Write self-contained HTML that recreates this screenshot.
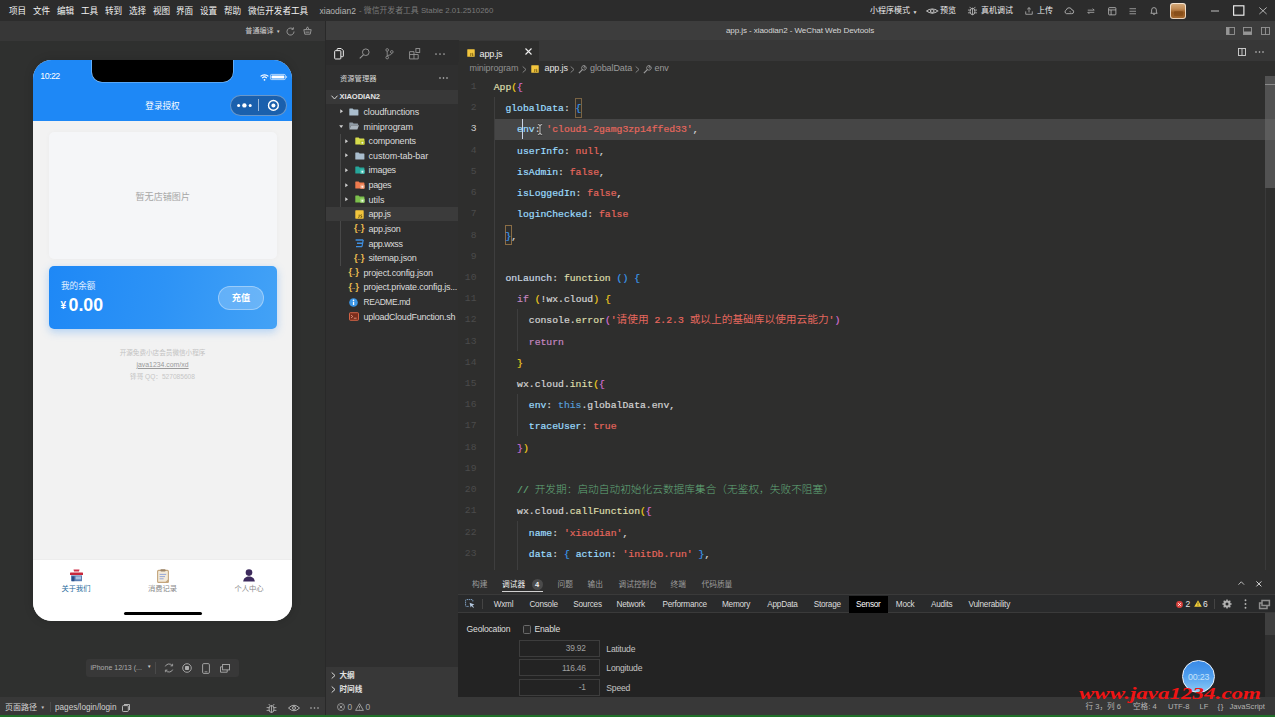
<!DOCTYPE html>
<html lang="zh-CN">
<head>
<meta charset="utf-8">
<title>app.js - xiaodian2 - WeChat Web Devtools</title>
<style>
*{box-sizing:border-box;margin:0;padding:0}
html,body{width:1275px;height:717px;overflow:hidden;background:#292929}
body{position:relative;font-family:"Liberation Sans","Noto Sans CJK SC",sans-serif;font-size:9px;color:#e8e8e8;-webkit-font-smoothing:antialiased}
.abs{position:absolute}
.t{position:absolute;white-space:nowrap;line-height:1}
svg{position:absolute;overflow:visible}
/* ---------- title bar ---------- */
#titlebar{left:0;top:0;width:1275px;height:20.6px;background:#2c2c2c}
#titlebar .m{font-size:8.6px;color:#f2f2f2;top:7px}
#titlebar .r{font-size:8px;color:#ececec;top:7.3px}
#row2l{left:0;top:20.6px;width:324.5px;height:20.4px;background:#373737}
#row2r{left:325.5px;top:20.6px;width:949.5px;height:19.8px;background:#3d3d3d}
/* ---------- simulator ---------- */
#sim{left:0;top:41px;width:324.5px;height:656px;background:#2f302f}
#simbar{left:0;top:697px;width:324.5px;height:18px;background:#383838}
#green{left:0;top:714.5px;width:1275px;height:2.5px;background:#1f6f28}
/* ---------- vs code ---------- */
.ptab{font-size:7.7px;top:10px}
.dt{font-size:8.2px;top:29.7px;letter-spacing:-0.22px}
.inp{left:61.2px;width:81px;height:17px;border:1px solid #3d3d3d;background:#232323}
.iv{left:61.2px;width:66.5px;text-align:right;font-size:8.4px;color:#a0a0a0;letter-spacing:-0.2px}
.il{left:148.3px;font-size:8.6px;color:#c4c4c4;letter-spacing:-0.2px}
.st{font-size:7.6px;color:#b4b4b4;top:6.2px}
.bc{font-size:9px;top:2.3px;letter-spacing:-0.1px}
.ln{left:0;width:18.5px;text-align:right;font-family:"Liberation Mono","DejaVu Sans Mono",monospace;font-size:9.7px}
.cl{-webkit-text-stroke:0.2px;left:35.7px;font-family:"Liberation Mono","DejaVu Sans Mono","Noto Sans CJK SC",monospace;font-size:9.75px;white-space:pre;color:#d4d4d4;line-height:13px}
.cj{font-family:"Noto Sans CJK SC",sans-serif;font-size:10.7px;line-height:0;-webkit-text-stroke:0;font-weight:300}
.tr{font-size:9px;color:#dcdcdc;letter-spacing:0px;margin-top:0.9px}
#actbg{left:325.5px;top:40.4px;width:133.5px;height:24.2px;background:#2c2c2c}
#actbar{left:327px;top:41px;width:131px;height:24px}
#sidebg{left:325.5px;top:64.6px;width:133.5px;height:632.4px;background:#2f2f2f}
#side{left:327px;top:65px;width:131px;height:632px}
#edtbg{left:459px;top:40.4px;width:816px;height:21px;background:#373737}
#edtabs{left:457.6px;top:41px;width:817px;height:20.5px}
#editor{left:458px;top:62px;width:817px;height:509px;background:#2e2e2d}
#panel{left:458px;top:571px;width:817px;height:126px;background:#2e2e2e}
#statbg{left:325.5px;top:697px;width:949.5px;height:18px;background:#383838}
#edbg{left:459px;top:61.4px;width:816px;height:2px;background:#2e2e2d}
#status{left:327px;top:697px;width:948px;height:17px}
</style>
</head>
<body>
<div id="titlebar" class="abs">
<span class="t m" style="left:9px">项目</span>
<span class="t m" style="left:33px">文件</span>
<span class="t m" style="left:57px">编辑</span>
<span class="t m" style="left:81px">工具</span>
<span class="t m" style="left:105px">转到</span>
<span class="t m" style="left:129px">选择</span>
<span class="t m" style="left:153px">视图</span>
<span class="t m" style="left:176px">界面</span>
<span class="t m" style="left:200px">设置</span>
<span class="t m" style="left:224px">帮助</span>
<span class="t m" style="left:248px">微信开发者工具</span>
<span class="t" style="left:319.5px;top:7px;font-size:8.5px;color:#b4b4b4">xiaodian2</span>
<span class="t" style="left:359px;top:7.3px;font-size:7.85px;color:#7a7a7a">- 微信开发者工具 Stable 2.01.2510260</span>
<span class="t r" style="left:870px">小程序模式</span>
<span class="t" style="left:912.5px;top:9.5px;font-size:5px;color:#ddd">▼</span>
<svg style="left:925.5px;top:7px" width="12.5" height="8" viewBox="0 0 11 9" preserveAspectRatio="none"><path d="M0.5 4.5 Q5.5 -0.5 10.5 4.5 Q5.5 9.5 0.5 4.5Z" fill="none" stroke="#cfcfcf" stroke-width="0.9"/><circle cx="5.5" cy="4.5" r="1.6" fill="none" stroke="#cfcfcf" stroke-width="0.9"/></svg>
<span class="t r" style="left:940px">预览</span>
<svg style="left:966.5px;top:5.5px" width="11" height="10" viewBox="0 0 12 11"><ellipse cx="6" cy="6" rx="2.6" ry="3.6" fill="none" stroke="#cfcfcf" stroke-width="0.9"/><path d="M6 2.4V9.6M4 2.5 3 1M8 2.5 9 1M3.4 4.5H1M3.4 7.5H1M8.6 4.5H11M8.6 7.5H11" stroke="#cfcfcf" stroke-width="0.8" fill="none"/></svg>
<span class="t r" style="left:981px">真机调试</span>
<svg style="left:1024.5px;top:6.5px" width="8" height="8" viewBox="0 0 11 11"><path d="M1 6V10H10V6M5.5 7.5V1M3 3.2 5.5 0.8 8 3.2" fill="none" stroke="#cfcfcf" stroke-width="0.9"/></svg>
<span class="t r" style="left:1037px">上传</span>
<svg style="left:1064px;top:7px" width="10" height="7.5" viewBox="0 0 12 9"><path d="M3 8H9.2A2.3 2.3 0 0 0 9.4 3.4 3.4 3.4 0 0 0 2.8 3.6 2.3 2.3 0 0 0 3 8Z" fill="none" stroke="#cfcfcf" stroke-width="0.9"/><path d="M7 5l1 1.5" stroke="#cfcfcf" stroke-width="0.8"/></svg>
<svg style="left:1086.5px;top:7.5px" width="8" height="6.5" viewBox="0 0 11 9"><path d="M1 3H10L7.8 0.8M10 6H1L3.2 8.2" fill="none" stroke="#cfcfcf" stroke-width="0.9"/></svg>
<svg style="left:1107.5px;top:6.5px" width="8.5" height="8.5" viewBox="0 0 11 11"><rect x="0.8" y="0.8" width="9.4" height="9.4" rx="1" fill="none" stroke="#cfcfcf" stroke-width="0.9"/><path d="M0.8 3.8H10.2M4 3.8V10.2" stroke="#cfcfcf" stroke-width="0.9"/></svg>
<svg style="left:1129px;top:7.5px" width="7.5" height="6.5" viewBox="0 0 10 9"><path d="M0.5 1H9.5M0.5 4.5H9.5M0.5 8H9.5" stroke="#cfcfcf" stroke-width="0.9"/></svg>
<svg style="left:1150px;top:6px" width="8" height="9.5" viewBox="0 0 10 12"><path d="M1 9.2H9L8 7.6V5A3 3 0 0 0 2 5V7.6Z" fill="none" stroke="#cfcfcf" stroke-width="0.9"/><path d="M4 10.6H6" stroke="#cfcfcf" stroke-width="0.9"/></svg>
<div class="abs" style="left:1169.8px;top:2.6px;width:16.4px;height:16.4px;border-radius:3px;background:linear-gradient(180deg,#f4e4d2 0%,#e8cfb6 100%)"></div>
<div class="abs" style="left:1171px;top:4.2px;width:14px;height:13.6px;border-radius:2px;background:linear-gradient(180deg,#d4a878 0%,#c08a54 35%,#96581f 62%,#a4682e 100%)"></div>
<div class="abs" style="left:1173.5px;top:11px;width:9.5px;height:4.5px;border-radius:1px;background:#7c4514;opacity:.55"></div>
<svg style="left:1210.5px;top:10px" width="8" height="2" viewBox="0 0 12 2" preserveAspectRatio="none"><path d="M0 1H12" stroke="#e0e0e0" stroke-width="1"/></svg>
<svg style="left:1233px;top:5px" width="11.5" height="11" viewBox="0 0 13 12"><rect x="0.7" y="0.7" width="11.6" height="10.6" fill="none" stroke="#f0f0f0" stroke-width="1.3"/></svg>
<svg style="left:1258.5px;top:7px" width="8" height="7.5" viewBox="0 0 11 10"><path d="M0.5 0.5 10.5 9.5M10.5 0.5 0.5 9.5" stroke="#e0e0e0" stroke-width="1"/></svg>
</div>
<div id="row2l" class="abs">
<span class="t" style="left:245.3px;top:7.2px;font-size:7.1px;color:#d0d0d0">普通编译</span>
<span class="t" style="left:276px;top:9px;font-size:4.5px;color:#ccc">▼</span>
<svg style="left:286px;top:6px" width="9" height="9" viewBox="0 0 11 11"><path d="M8.6 2.6A4.3 4.3 0 1 0 9.8 5.5" fill="none" stroke="#b4b4b4" stroke-width="0.9"/><path d="M6.6 2.8H9V0.4" fill="none" stroke="#b4b4b4" stroke-width="0.9"/></svg>
<svg style="left:302.5px;top:5.5px" width="9" height="9" viewBox="0 0 11 11"><path d="M1 4.5H10L8.8 10H2.2ZM3.5 4.5 5.5 1 7.5 4.5M3 7.5H8" fill="none" stroke="#b4b4b4" stroke-width="0.9"/></svg>
</div>
<div id="row2r" class="abs">
<span class="t" style="left:0;width:949px;text-align:center;top:6.8px;font-size:8.1px;letter-spacing:-0.1px;color:#d6d6d6">app.js - xiaodian2 - WeChat Web Devtools</span>
<svg style="left:900px;top:6px" width="9" height="8" viewBox="0 0 9 8"><rect x="0.5" y="0.5" width="8" height="7" fill="none" stroke="#969696" stroke-width="0.9"/><rect x="0.5" y="0.5" width="3" height="7" fill="#969696"/></svg>
<svg style="left:917px;top:6px" width="9" height="8" viewBox="0 0 9 8"><rect x="0.5" y="0.5" width="8" height="7" fill="none" stroke="#969696" stroke-width="0.9"/><rect x="0.5" y="4.5" width="8" height="3" fill="#969696"/></svg>
<svg style="left:935px;top:6px" width="9" height="8" viewBox="0 0 9 8"><rect x="0.5" y="0.5" width="8" height="7" fill="none" stroke="#969696" stroke-width="0.9"/><path d="M4.5 0.5V7.5" stroke="#969696" stroke-width="0.9"/></svg>
</div>
<div id="sim" class="abs">
<div id="phone" class="abs" style="left:33px;top:19px;width:259px;height:561px;border-radius:18.5px;background:#f2f2f2;overflow:hidden;box-shadow:0 0 8px 1px rgba(0,0,0,.13)">
 <div class="abs" style="left:0;top:0;width:259px;height:61px;background:#1e88f6"></div>
 <div class="abs" style="left:59.2px;top:-12px;width:140.5px;height:33.5px;border-radius:10px;background:#000;box-shadow:0 0 0 0.6px rgba(190,225,255,.7)"></div>
 <span class="t" style="left:7.3px;top:12.2px;font-size:8.8px;color:#fff;letter-spacing:-0.55px">10:22</span>
 <svg style="left:227px;top:13.5px" width="9" height="7" viewBox="0 0 9 7"><path d="M0.6 2.4A5.6 5.6 0 0 1 8.4 2.4" fill="none" stroke="#fff" stroke-width="1.2"/><path d="M2.2 4.1A3.3 3.3 0 0 1 6.8 4.1" fill="none" stroke="#fff" stroke-width="1.2"/><circle cx="4.5" cy="5.8" r="0.9" fill="#fff"/></svg>
 <svg style="left:237px;top:14px" width="18" height="6" viewBox="0 0 18 6"><rect x="0.4" y="0.4" width="15" height="5.2" rx="1.2" fill="none" stroke="#fff" stroke-width="0.8" opacity=".8"/><rect x="1.5" y="1.4" width="12.8" height="3.2" rx="0.5" fill="#fff"/><path d="M16.2 2V4L17.3 3Z" fill="#fff"/></svg>
 <span class="t" style="left:0;width:259px;text-align:center;top:42.3px;font-size:8.6px;color:#fff">登录授权</span>
 <div class="abs" style="left:197px;top:34.5px;width:57px;height:21px;border-radius:11px;background:#1a60ad;border:0.7px solid rgba(255,255,255,.35)"></div>
 <svg style="left:203px;top:42px" width="17" height="7" viewBox="0 0 17 7"><circle cx="2.6" cy="3.4" r="1.5" fill="#fff"/><circle cx="8.4" cy="3.4" r="2.2" fill="#fff"/><circle cx="14.2" cy="3.4" r="1.5" fill="#fff"/></svg>
 <div class="abs" style="left:225px;top:39px;width:1px;height:12px;background:rgba(255,255,255,.55)"></div>
 <svg style="left:234px;top:39px" width="13" height="13" viewBox="0 0 13 13"><circle cx="6.4" cy="6.4" r="4.9" fill="none" stroke="#fff" stroke-width="1.4"/><circle cx="6.4" cy="6.4" r="2" fill="#fff"/></svg>

 <div class="abs" style="left:16px;top:72px;width:227.5px;height:127px;border-radius:5px;background:#f5f6f8;box-shadow:0 0 5px rgba(0,0,0,.03)"></div>
 <span class="t" style="left:16px;width:227.5px;text-align:center;top:132.5px;font-size:9.1px;color:#a6a6a6">暂无店铺图片</span>

 <div class="abs" style="left:16px;top:206px;width:227.5px;height:63px;border-radius:5px;background:linear-gradient(100deg,#1e88f6 0%,#2d93f6 50%,#43a2f6 100%);box-shadow:0 3px 9px rgba(60,150,245,.35)"></div>
 <span class="t" style="left:28px;top:221.5px;font-size:8.6px;color:#e4f0fe">我的余额</span>
 <span class="t" style="left:27.5px;top:241px;font-size:10px;color:#fff;font-weight:bold">¥</span>
 <span class="t" style="left:35.5px;top:236.5px;font-size:17.8px;color:#fff;font-weight:bold">0.00</span>
 <div class="abs" style="left:185px;top:226px;width:46px;height:23.5px;border-radius:12px;background:rgba(255,255,255,.22);border:0.7px solid rgba(255,255,255,.35)"></div>
 <span class="t" style="left:185px;width:46px;text-align:center;top:233.5px;font-size:9.2px;color:#fff;font-weight:bold">充值</span>

 <span class="t" style="left:0;width:259px;text-align:center;top:289.5px;font-size:6.6px;color:#c2c2c2">开源免费小店会员微信小程序</span>
 <span class="t" style="left:0;width:259px;text-align:center;top:301.5px;font-size:6.9px;color:#9a9a9a;text-decoration:underline">java1234.com/xd</span>
 <span class="t" style="left:0;width:259px;text-align:center;top:313.5px;font-size:6.6px;color:#c6c6c6">锋哥 QQ：527085608</span>

 <div class="abs" style="left:0;top:500px;width:259px;height:61px;background:#fff;box-shadow:0 -0.5px 0 rgba(0,0,0,.04)"></div>
 <!-- tab icons -->
 <svg style="left:37px;top:509px" width="13" height="13" viewBox="0 0 13 13"><path d="M3.5 0.6H9.5L9 2.4H4Z" fill="#d0334a"/><rect x="0" y="3.6" width="13" height="2.3" rx="0.5" fill="#c8283c"/><rect x="1" y="6.4" width="11" height="5.8" fill="#5a7fb4"/><rect x="2" y="7.4" width="2.4" height="4.8" fill="#2b4f86"/><rect x="5.6" y="7.4" width="5.4" height="3" fill="#a9c0e2"/></svg>
 <span class="t" style="left:0;width:86px;text-align:center;top:525px;font-size:7.3px;color:#276a9c">关于我们</span>
 <svg style="left:123.5px;top:508.5px" width="12" height="14" viewBox="0 0 12 14"><rect x="0.6" y="1.4" width="10.8" height="12" rx="1" fill="#f3ead9" stroke="#c4a57c" stroke-width="1.1"/><rect x="3.4" y="0.2" width="5.2" height="2.4" rx="0.8" fill="#9b8468"/><path d="M2.6 5.4H9.2M2.6 7.6H8M2.6 9.8H6.6" stroke="#8a9fd6" stroke-width="0.9"/><path d="M8 13.4 11.4 10V13.4Z" fill="#c4a57c"/></svg>
 <span class="t" style="left:86px;width:87px;text-align:center;top:525px;font-size:7.3px;color:#8a8a8a">消费记录</span>
 <svg style="left:210px;top:509px" width="12" height="13" viewBox="0 0 12 13"><circle cx="6" cy="3.6" r="3.3" fill="#3c2a5c"/><path d="M0.2 12.6C0.6 9 3 7.6 6 7.6S11.4 9 11.8 12.6Z" fill="#3c2a5c"/></svg>
 <span class="t" style="left:173px;width:86px;text-align:center;top:525px;font-size:7.3px;color:#8a8a8a">个人中心</span>
 <div class="abs" style="left:91px;top:551.5px;width:78px;height:3.6px;border-radius:2px;background:#000"></div>
</div>

<div class="abs" style="left:86px;top:618px;width:153px;height:18px;border-radius:3px;background:#383838"></div>
<span class="t" style="left:90.5px;top:623px;font-size:7px;color:#adadad">iPhone 12/13 (...</span>
<span class="t" style="left:147px;top:624px;font-size:4.5px;color:#ccc">▼</span>
<div class="abs" style="left:155px;top:621px;width:1px;height:12px;background:#4a4a4a"></div>
<svg style="left:163.5px;top:622px" width="10" height="10" viewBox="0 0 10 10"><path d="M1.3 3.4A4 4 0 0 1 8.2 2.6M8.7 6.6A4 4 0 0 1 1.8 7.4" fill="none" stroke="#adadad" stroke-width="0.9"/><path d="M8.6 0.8V2.9H6.5M1.4 9.2V7.1H3.5" fill="none" stroke="#adadad" stroke-width="0.8"/></svg>
<svg style="left:182px;top:622px" width="10" height="10" viewBox="0 0 10 10"><circle cx="5" cy="5" r="4.3" fill="none" stroke="#adadad" stroke-width="0.9"/><rect x="3" y="3" width="4" height="4" rx="0.8" fill="#adadad"/></svg>
<svg style="left:202px;top:621.5px" width="8" height="11" viewBox="0 0 8 11"><rect x="0.6" y="0.6" width="6.8" height="9.8" rx="1.2" fill="none" stroke="#adadad" stroke-width="0.9"/><path d="M2.6 8.8H5.4" stroke="#adadad" stroke-width="0.8"/></svg>
<svg style="left:219.5px;top:622.5px" width="10" height="9" viewBox="0 0 10 9"><rect x="2.6" y="0.5" width="6.9" height="5.4" fill="none" stroke="#adadad" stroke-width="0.9"/><path d="M2.6 2.8H0.5V8.2H7.2V5.9" fill="none" stroke="#adadad" stroke-width="0.9"/></svg>
</div>
<div id="simbar" class="abs">
<span class="t" style="left:5px;top:6.5px;font-size:8px;color:#d4d4d4">页面路径</span>
<span class="t" style="left:40.5px;top:9px;font-size:4.5px;color:#c8c8c8">▼</span>
<div class="abs" style="left:50px;top:5px;width:1px;height:10px;background:#4c4c4c"></div>
<span class="t" style="left:55px;top:6.5px;font-size:8.2px;color:#cfcfcf">pages/login/login</span>
<svg style="left:122px;top:6.5px" width="8" height="8" viewBox="0 0 8 8"><rect x="0.5" y="1.6" width="5.8" height="5.9" rx="0.8" fill="none" stroke="#c4c4c4" stroke-width="0.9"/><path d="M2 0.5H7.5V6" fill="none" stroke="#c4c4c4" stroke-width="0.9"/></svg>
<svg style="left:265.5px;top:5.5px" width="11" height="11" viewBox="0 0 11 11"><ellipse cx="5.5" cy="6" rx="2.5" ry="3.5" fill="none" stroke="#bdbdbd" stroke-width="0.9"/><path d="M5.5 2.5V9.5M3.8 2.6 2.8 1M7.2 2.6 8.2 1M3 4.6H0.6M3 7.4H0.6M8 4.6H10.4M8 7.4H10.4" stroke="#bdbdbd" stroke-width="0.8" fill="none"/></svg>
<svg style="left:288px;top:7px" width="12" height="8" viewBox="0 0 12 8"><path d="M0.5 4Q6 -1.5 11.5 4Q6 9.5 0.5 4Z" fill="none" stroke="#bdbdbd" stroke-width="0.9"/><circle cx="6" cy="4" r="1.5" fill="none" stroke="#bdbdbd" stroke-width="0.9"/></svg>
<svg style="left:310px;top:10px" width="9" height="2" viewBox="0 0 9 2"><circle cx="1" cy="1" r="0.8" fill="#bdbdbd"/><circle cx="4.5" cy="1" r="0.8" fill="#bdbdbd"/><circle cx="8" cy="1" r="0.8" fill="#bdbdbd"/></svg>
</div>
<div id="actbg" class="abs"></div>
<div id="sidebg" class="abs"></div>
<div id="actbar" class="abs">
<svg style="left:6.5px;top:7px" width="10" height="11.5" viewBox="0 0 11 13"><path d="M3.4 2.6V1.4Q3.4 0.6 4.2 0.6H8L10.4 3V9Q10.4 9.8 9.6 9.8H8" fill="none" stroke="#f4f4f4" stroke-width="1.1"/><rect x="0.6" y="3" width="7" height="9.4" rx="0.9" fill="none" stroke="#f4f4f4" stroke-width="1.1"/></svg>
<svg style="left:31.5px;top:7px" width="11" height="11" viewBox="0 0 12 12"><circle cx="7.4" cy="4.6" r="3.6" fill="none" stroke="#9a9a9a" stroke-width="1"/><path d="M4.8 7.4 0.8 11.4" stroke="#9a9a9a" stroke-width="1.1"/></svg>
<svg style="left:57.5px;top:7px" width="9" height="11.5" viewBox="0 0 10 13"><circle cx="2.4" cy="2.2" r="1.5" fill="none" stroke="#9a9a9a" stroke-width="0.9"/><circle cx="2.4" cy="10.8" r="1.5" fill="none" stroke="#9a9a9a" stroke-width="0.9"/><circle cx="7.6" cy="4.4" r="1.5" fill="none" stroke="#9a9a9a" stroke-width="0.9"/><path d="M2.4 3.7V9.3M7.6 5.9Q7.6 8 2.6 8.6" fill="none" stroke="#9a9a9a" stroke-width="0.9"/></svg>
<svg style="left:82px;top:7px" width="11.5" height="11.5" viewBox="0 0 12 12"><path d="M0.6 3.8H5.2V11.4H0.6ZM5.2 6.8H9.6V11.4H5.2M0.6 6.8H5.2" fill="none" stroke="#9a9a9a" stroke-width="0.9"/><rect x="7.2" y="0.6" width="4" height="4" fill="none" stroke="#9a9a9a" stroke-width="0.9"/></svg>
<svg style="left:108px;top:11.5px" width="10" height="2" viewBox="0 0 10 2"><circle cx="1" cy="1" r="0.85" fill="#a8a8a8"/><circle cx="5" cy="1" r="0.85" fill="#a8a8a8"/><circle cx="9" cy="1" r="0.85" fill="#a8a8a8"/></svg>
</div>
<div id="side" class="abs">
<span class="t" style="left:13px;top:9.8px;font-size:7.3px;color:#d8d8d8">资源管理器</span>
<svg style="left:112px;top:12.3px" width="9" height="2" viewBox="0 0 9 2"><circle cx="1" cy="1" r="0.8" fill="#d0d0d0"/><circle cx="4.5" cy="1" r="0.8" fill="#d0d0d0"/><circle cx="8" cy="1" r="0.8" fill="#d0d0d0"/></svg>
<div class="abs" style="left:-1.5px;top:25px;width:133.5px;height:13.5px;background:#383838"></div>
<svg style="left:4px;top:29.5px" width="7" height="5" viewBox="0 0 7 5"><path d="M0.5 0.7 3.5 4 6.5 0.7" fill="none" stroke="#d8d8d8" stroke-width="1"/></svg>
<span class="t" style="left:12.5px;top:28px;font-size:7.6px;color:#e2e2e2;font-weight:bold;letter-spacing:-0.1px">XIAODIAN2</span>
<div class="abs" style="left:12.5px;top:69px;width:1px;height:132px;background:#484848"></div>
<svg style="left:12.5px;top:44.4px" width="3.2" height="4.4" viewBox="0 0 4 5"><path d="M0.3 0V5L3.8 2.5Z" fill="#cfcfcf"/></svg>
<svg style="left:22px;top:42.7px" width="10" height="8" viewBox="0 0 10 8"><path d="M0.3 7V0.9Q0.3 0.4 0.8 0.4H3.6L4.6 1.5H8.8Q9.4 1.5 9.4 2.1V7Q9.4 7.5 8.8 7.5H0.9Q0.3 7.5 0.3 7Z" fill="#a9bdcd"/></svg>
<span class="t tr" style="left:36.5px;top:42.1px;letter-spacing:-0.14px">cloudfunctions</span>
<svg style="left:12.0px;top:59.5px" width="4.4" height="3.2" viewBox="0 0 5 4"><path d="M0 0.3H5L2.5 3.8Z" fill="#cfcfcf"/></svg>
<svg style="left:22px;top:57.3px" width="10" height="8" viewBox="0 0 10 8"><path d="M0.3 7.5V0.9Q0.3 0.4 0.8 0.4H3.6L4.6 1.5H8.6Q9.1 1.5 9.1 2V3H2.2Z" fill="#8e9aa3"/><path d="M0.4 7.6 2.2 3.2H10L8.4 7.6Z" fill="#aab5bd"/></svg>
<span class="t tr" style="left:36.5px;top:56.7px;letter-spacing:-0.05px">miniprogram</span>
<svg style="left:17.600000000000023px;top:73.6px" width="3.2" height="4.4" viewBox="0 0 4 5"><path d="M0.3 0V5L3.8 2.5Z" fill="#cfcfcf"/></svg>
<svg style="left:27.5px;top:71.9px" width="10" height="8" viewBox="0 0 10 8"><path d="M0.3 7V0.9Q0.3 0.4 0.8 0.4H3.6L4.6 1.5H8.8Q9.4 1.5 9.4 2.1V7Q9.4 7.5 8.8 7.5H0.9Q0.3 7.5 0.3 7Z" fill="#d6dc4c"/><rect x="5.2" y="3.6" width="4.4" height="4.2" rx="0.8" fill="#b8c22c"/><circle cx="7.4" cy="5.7" r="1" fill="#fff" opacity=".85"/></svg>
<span class="t tr" style="left:41.6px;top:71.3px;letter-spacing:-0.17px">components</span>
<svg style="left:17.600000000000023px;top:88.3px" width="3.2" height="4.4" viewBox="0 0 4 5"><path d="M0.3 0V5L3.8 2.5Z" fill="#cfcfcf"/></svg>
<svg style="left:27.5px;top:86.6px" width="10" height="8" viewBox="0 0 10 8"><path d="M0.3 7V0.9Q0.3 0.4 0.8 0.4H3.6L4.6 1.5H8.8Q9.4 1.5 9.4 2.1V7Q9.4 7.5 8.8 7.5H0.9Q0.3 7.5 0.3 7Z" fill="#a9bdcd"/></svg>
<span class="t tr" style="left:41.6px;top:86.0px;letter-spacing:-0.07px">custom-tab-bar</span>
<svg style="left:17.600000000000023px;top:102.9px" width="3.2" height="4.4" viewBox="0 0 4 5"><path d="M0.3 0V5L3.8 2.5Z" fill="#cfcfcf"/></svg>
<svg style="left:27.5px;top:101.2px" width="10" height="8" viewBox="0 0 10 8"><path d="M0.3 7V0.9Q0.3 0.4 0.8 0.4H3.6L4.6 1.5H8.8Q9.4 1.5 9.4 2.1V7Q9.4 7.5 8.8 7.5H0.9Q0.3 7.5 0.3 7Z" fill="#26a69a"/><rect x="5.2" y="3.6" width="4.4" height="4.2" rx="0.8" fill="#4dc4b8"/><circle cx="7.4" cy="5.7" r="1" fill="#fff" opacity=".85"/></svg>
<span class="t tr" style="left:41.6px;top:100.6px;letter-spacing:-0.30px">images</span>
<svg style="left:17.600000000000023px;top:117.5px" width="3.2" height="4.4" viewBox="0 0 4 5"><path d="M0.3 0V5L3.8 2.5Z" fill="#cfcfcf"/></svg>
<svg style="left:27.5px;top:115.8px" width="10" height="8" viewBox="0 0 10 8"><path d="M0.3 7V0.9Q0.3 0.4 0.8 0.4H3.6L4.6 1.5H8.8Q9.4 1.5 9.4 2.1V7Q9.4 7.5 8.8 7.5H0.9Q0.3 7.5 0.3 7Z" fill="#ee7b4e"/><rect x="5.2" y="3.6" width="4.4" height="4.2" rx="0.8" fill="#f4a07c"/><circle cx="7.4" cy="5.7" r="1" fill="#fff" opacity=".85"/></svg>
<span class="t tr" style="left:41.6px;top:115.2px;letter-spacing:-0.38px">pages</span>
<svg style="left:17.600000000000023px;top:132.1px" width="3.2" height="4.4" viewBox="0 0 4 5"><path d="M0.3 0V5L3.8 2.5Z" fill="#cfcfcf"/></svg>
<svg style="left:27.5px;top:130.4px" width="10" height="8" viewBox="0 0 10 8"><path d="M0.3 7V0.9Q0.3 0.4 0.8 0.4H3.6L4.6 1.5H8.8Q9.4 1.5 9.4 2.1V7Q9.4 7.5 8.8 7.5H0.9Q0.3 7.5 0.3 7Z" fill="#7cc04c"/><rect x="5.2" y="3.6" width="4.4" height="4.2" rx="0.8" fill="#a0d878"/><circle cx="7.4" cy="5.7" r="1" fill="#fff" opacity=".85"/></svg>
<span class="t tr" style="left:41.6px;top:129.8px;letter-spacing:-0.04px">utils</span>
<div class="abs" style="left:0;top:141.9px;width:133.5px;margin-left:-1.5px;height:14.6px;background:#3b3b3b"></div>
<svg style="left:27.5px;top:144.7px" width="9" height="9" viewBox="0 0 9 9"><rect x="0.3" y="0.3" width="8.4" height="8.4" rx="0.6" fill="#f2c53d"/><path d="M4.2 4.6V7Q4.2 7.8 3.3 7.6M6.9 5Q5.6 4.4 5.6 5.4T6.9 6.6 5.5 7.5" fill="none" stroke="#5a4708" stroke-width="0.75"/></svg>
<span class="t tr" style="left:41.6px;top:144.4px;letter-spacing:-0.32px">app.js</span>
<span class="t" style="left:27.0px;top:158.4px;font-size:9.5px;color:#e7b94f;font-weight:bold;letter-spacing:-0.3px;font-family:'Liberation Sans',sans-serif">{<span style="font-size:6px;letter-spacing:0;position:relative;top:-0.5px">..</span>}</span>
<span class="t tr" style="left:41.6px;top:159.1px;letter-spacing:-0.27px">app.json</span>
<svg style="left:27.5px;top:174.0px" width="9" height="9" viewBox="0 0 9 9"><path d="M0.6 1H8.2M2 4.2H7.6M1 7.6H7" stroke="#3f8fe0" stroke-width="1.4" fill="none"/><path d="M8.2 1 7 7.6" stroke="#3f8fe0" stroke-width="1.2"/></svg>
<span class="t tr" style="left:41.6px;top:173.7px;letter-spacing:-0.46px">app.wxss</span>
<span class="t" style="left:27.0px;top:187.6px;font-size:9.5px;color:#e7b94f;font-weight:bold;letter-spacing:-0.3px;font-family:'Liberation Sans',sans-serif">{<span style="font-size:6px;letter-spacing:0;position:relative;top:-0.5px">..</span>}</span>
<span class="t tr" style="left:41.6px;top:188.3px;letter-spacing:-0.22px">sitemap.json</span>
<span class="t" style="left:21.5px;top:202.2px;font-size:9.5px;color:#e7b94f;font-weight:bold;letter-spacing:-0.3px;font-family:'Liberation Sans',sans-serif">{<span style="font-size:6px;letter-spacing:0;position:relative;top:-0.5px">..</span>}</span>
<span class="t tr" style="left:36.5px;top:202.9px;letter-spacing:-0.17px">project.config.json</span>
<span class="t" style="left:21.5px;top:216.8px;font-size:9.5px;color:#e7b94f;font-weight:bold;letter-spacing:-0.3px;font-family:'Liberation Sans',sans-serif">{<span style="font-size:6px;letter-spacing:0;position:relative;top:-0.5px">..</span>}</span>
<span class="t tr" style="left:36.5px;top:217.5px;letter-spacing:-0.21px">project.private.config.js...</span>
<svg style="left:22px;top:232.5px" width="9" height="9" viewBox="0 0 9 9"><circle cx="4.5" cy="4.5" r="4.3" fill="#3b96e6"/><rect x="3.9" y="3.8" width="1.3" height="3.2" fill="#fff"/><circle cx="4.5" cy="2.4" r="0.8" fill="#fff"/></svg>
<span class="t tr" style="left:36.5px;top:232.2px;letter-spacing:-0.35px;font-size:8.4px">README.md</span>
<svg style="left:21.5px;top:247.1px" width="10" height="9" viewBox="0 0 10 9"><rect x="0.5" y="0.7" width="9" height="7.6" rx="0.8" fill="#7a2e1c" stroke="#e2694a" stroke-width="0.9"/><path d="M2 3 3.8 4.5 2 6M4.8 6.2H7.6" fill="none" stroke="#f0a58e" stroke-width="0.8"/></svg>
<span class="t tr" style="left:36.5px;top:246.8px;letter-spacing:-0.24px">uploadCloudFunction.sh</span>
<div class="abs" style="left:-1.5px;top:602px;width:133.5px;height:30px;background:#383838"></div>
<svg style="left:4px;top:607px" width="5" height="7" viewBox="0 0 5 7"><path d="M0.7 0.5 4 3.5 0.7 6.5" fill="none" stroke="#d8d8d8" stroke-width="1"/></svg>
<span class="t" style="left:12.5px;top:606.5px;font-size:7.6px;color:#e2e2e2;font-weight:bold">大纲</span>
<svg style="left:4px;top:621px" width="5" height="7" viewBox="0 0 5 7"><path d="M0.7 0.5 4 3.5 0.7 6.5" fill="none" stroke="#d8d8d8" stroke-width="1"/></svg>
<span class="t" style="left:12.5px;top:620.5px;font-size:7.6px;color:#e2e2e2;font-weight:bold">时间线</span>
</div>
<div id="edtbg" class="abs"></div>
<div id="edbg" class="abs"></div>
<div id="statbg" class="abs"></div>
<div id="edtabs" class="abs">
<div class="abs" style="left:1.2px;top:-0.2px;width:80px;height:21px;background:#2e2e2d"></div>
<svg style="left:9px;top:8px" width="8" height="8" viewBox="0 0 9 9"><rect x="0.3" y="0.3" width="8.4" height="8.4" rx="0.6" fill="#f2c53d"/><path d="M4.2 4.6V7Q4.2 7.8 3.3 7.6M6.9 5Q5.6 4.4 5.6 5.4T6.9 6.6 5.5 7.5" fill="none" stroke="#5a4708" stroke-width="0.75"/></svg>
<span class="t" style="left:22px;top:8.5px;font-size:9px;color:#f0f0f0;letter-spacing:-0.2px">app.js</span>
<svg style="left:67px;top:7px" width="7" height="7" viewBox="0 0 7 7"><path d="M0.5 0.5 6.5 6.5M6.5 0.5 0.5 6.5" stroke="#f0f0f0" stroke-width="1.1"/></svg>
<svg style="left:780px;top:6.5px" width="8" height="8" viewBox="0 0 8 8"><rect x="0.5" y="0.5" width="7" height="7" fill="none" stroke="#d4d4d4" stroke-width="0.9"/><path d="M4 0.5V7.5" stroke="#d4d4d4" stroke-width="0.9"/></svg>
<svg style="left:797px;top:9.5px" width="9" height="2" viewBox="0 0 9 2"><circle cx="1" cy="1" r="0.8" fill="#d0d0d0"/><circle cx="4.5" cy="1" r="0.8" fill="#d0d0d0"/><circle cx="8" cy="1" r="0.8" fill="#d0d0d0"/></svg>
</div>
<div id="editor" class="abs">
<span class="t bc" style="left:11.5px;color:#909090">miniprogram</span>
<svg style="left:64px;top:4px" width="5" height="7" viewBox="0 0 5 7"><path d="M0.7 0.5 4 3.5 0.7 6.5" fill="none" stroke="#8c8c8c" stroke-width="0.9"/></svg>
<svg style="left:73px;top:2.8px" width="8" height="8" viewBox="0 0 9 9"><rect x="0.3" y="0.3" width="8.4" height="8.4" rx="0.6" fill="#f2c53d"/><path d="M4.2 4.6V7Q4.2 7.8 3.3 7.6M6.9 5Q5.6 4.4 5.6 5.4T6.9 6.6 5.5 7.5" fill="none" stroke="#5a4708" stroke-width="0.75"/></svg>
<span class="t bc" style="left:86.5px;color:#e4e4e4">app.js</span>
<svg style="left:111.5px;top:4px" width="5" height="7" viewBox="0 0 5 7"><path d="M0.7 0.5 4 3.5 0.7 6.5" fill="none" stroke="#8c8c8c" stroke-width="0.9"/></svg>
<svg style="left:120px;top:2.5px" width="9" height="9" viewBox="0 0 9 9"><path d="M0.9 8.1 4.6 4.4" stroke="#9a9a9a" stroke-width="1.3" fill="none"/><path d="M7.9 1.6 6.4 3 5.7 2.4 7.2 0.9A2.3 2.3 0 1 0 7.9 1.6Z" fill="none" stroke="#9a9a9a" stroke-width="0.9"/></svg>
<span class="t bc" style="left:132px;color:#9a9a9a">globalData</span>
<svg style="left:177px;top:4px" width="5" height="7" viewBox="0 0 5 7"><path d="M0.7 0.5 4 3.5 0.7 6.5" fill="none" stroke="#8c8c8c" stroke-width="0.9"/></svg>
<svg style="left:184.5px;top:2.5px" width="9" height="9" viewBox="0 0 9 9"><path d="M0.9 8.1 4.6 4.4" stroke="#9a9a9a" stroke-width="1.3" fill="none"/><path d="M7.9 1.6 6.4 3 5.7 2.4 7.2 0.9A2.3 2.3 0 1 0 7.9 1.6Z" fill="none" stroke="#9a9a9a" stroke-width="0.9"/></svg>
<span class="t bc" style="left:196.5px;color:#9a9a9a">env</span>
<div class="abs" style="left:35.5px;top:56.5px;width:771.5px;height:21px;background:#464646"></div>
<div class="abs" style="left:36px;top:35px;width:1px;height:473px;background:#3e3e3e"></div>
<div class="abs" style="left:59px;top:247px;width:1px;height:42px;background:#3e3e3e"></div>
<div class="abs" style="left:59px;top:332px;width:1px;height:42px;background:#3e3e3e"></div>
<div class="abs" style="left:59px;top:459px;width:1px;height:49px;background:#3e3e3e"></div>
<div class="abs" style="left:117px;top:35.5px;width:6.5px;height:20.5px;border:0.8px solid #7a6444"></div>
<div class="abs" style="left:47px;top:162.5px;width:6.5px;height:20.5px;border:0.8px solid #8a6d45"></div>
<!--CODE-->
<span class="t ln" style="top:20.0px;color:#4b4b4b">1</span>
<span class="t cl" style="top:19.0px"><span style="color:#dcdcaa">App</span><span style="color:#f2cf1d">(</span><span style="color:#d670d6">{</span></span>
<span class="t ln" style="top:41.2px;color:#4b4b4b">2</span>
<span class="t cl" style="top:40.2px">  <span style="color:#9cdcfe">globalData</span><span style="color:#d4d4d4">: </span><span style="color:#3b9bf0">{</span></span>
<span class="t ln" style="top:62.4px;color:#d0d0d0">3</span>
<span class="t cl" style="top:61.4px">    <span style="color:#9cdcfe">env</span><span style="color:#d4d4d4">: </span><span style="color:#e5675d">'cloud1-2gamg3zp14ffed33'</span><span style="color:#d4d4d4">,</span></span>
<span class="t ln" style="top:83.6px;color:#4b4b4b">4</span>
<span class="t cl" style="top:82.6px">    <span style="color:#9cdcfe">userInfo</span><span style="color:#d4d4d4">: </span><span style="color:#e5675d">null</span><span style="color:#d4d4d4">,</span></span>
<span class="t ln" style="top:104.8px;color:#4b4b4b">5</span>
<span class="t cl" style="top:103.8px">    <span style="color:#9cdcfe">isAdmin</span><span style="color:#d4d4d4">: </span><span style="color:#e5675d">false</span><span style="color:#d4d4d4">,</span></span>
<span class="t ln" style="top:126.0px;color:#4b4b4b">6</span>
<span class="t cl" style="top:125.0px">    <span style="color:#9cdcfe">isLoggedIn</span><span style="color:#d4d4d4">: </span><span style="color:#e5675d">false</span><span style="color:#d4d4d4">,</span></span>
<span class="t ln" style="top:147.2px;color:#4b4b4b">7</span>
<span class="t cl" style="top:146.2px">    <span style="color:#9cdcfe">loginChecked</span><span style="color:#d4d4d4">: </span><span style="color:#e5675d">false</span></span>
<span class="t ln" style="top:168.5px;color:#4b4b4b">8</span>
<span class="t cl" style="top:167.5px">  <span style="color:#3b9bf0">}</span><span style="color:#d4d4d4">,</span></span>
<span class="t ln" style="top:189.7px;color:#4b4b4b">9</span>
<span class="t ln" style="top:210.9px;color:#4b4b4b">10</span>
<span class="t cl" style="top:209.9px">  <span style="color:#c9d7e2">onLaunch</span><span style="color:#d4d4d4">: </span><span style="color:#dcdcaa">function</span> <span style="color:#3b9bf0">()</span> <span style="color:#3b9bf0">{</span></span>
<span class="t ln" style="top:232.1px;color:#4b4b4b">11</span>
<span class="t cl" style="top:231.1px">    <span style="color:#c586c0">if</span> <span style="color:#f2cf1d">(</span><span style="color:#d4d4d4">!</span><span style="color:#d4d4d4">wx.cloud</span><span style="color:#f2cf1d">)</span> <span style="color:#f2cf1d">{</span></span>
<span class="t ln" style="top:253.3px;color:#4b4b4b">12</span>
<span class="t cl" style="top:252.3px">      <span style="color:#d4d4d4">console.</span><span style="color:#dcdcaa">error</span><span style="color:#d670d6">(</span><span style="color:#e5675d">'<span class="cj" style="font-weight:400">请使用</span> 2.2.3 <span class="cj" style="font-weight:400">或以上的基础库以使用云能力</span>'</span><span style="color:#d670d6">)</span></span>
<span class="t ln" style="top:274.5px;color:#4b4b4b">13</span>
<span class="t cl" style="top:273.5px">      <span style="color:#c586c0">return</span></span>
<span class="t ln" style="top:295.7px;color:#4b4b4b">14</span>
<span class="t cl" style="top:294.7px">    <span style="color:#f2cf1d">}</span></span>
<span class="t ln" style="top:317.0px;color:#4b4b4b">15</span>
<span class="t cl" style="top:316.0px">    <span style="color:#d4d4d4">wx.cloud.</span><span style="color:#dcdcaa">init</span><span style="color:#f2cf1d">(</span><span style="color:#d670d6">{</span></span>
<span class="t ln" style="top:338.2px;color:#4b4b4b">16</span>
<span class="t cl" style="top:337.2px">      <span style="color:#9cdcfe">env</span><span style="color:#d4d4d4">: </span><span style="color:#569cd6">this</span><span style="color:#d4d4d4">.globalData.env,</span></span>
<span class="t ln" style="top:359.4px;color:#4b4b4b">17</span>
<span class="t cl" style="top:358.4px">      <span style="color:#9cdcfe">traceUser</span><span style="color:#d4d4d4">: </span><span style="color:#e5675d">true</span></span>
<span class="t ln" style="top:380.6px;color:#4b4b4b">18</span>
<span class="t cl" style="top:379.6px">    <span style="color:#d670d6">}</span><span style="color:#f2cf1d">)</span></span>
<span class="t ln" style="top:401.8px;color:#4b4b4b">19</span>
<span class="t ln" style="top:423.0px;color:#4b4b4b">20</span>
<span class="t cl" style="top:422.0px">    <span style="color:#62a97a">// <span class="cj">开发期：启动自动初始化云数据库集合（无鉴权，失败不阻塞）</span></span></span>
<span class="t ln" style="top:444.2px;color:#4b4b4b">21</span>
<span class="t cl" style="top:443.2px">    <span style="color:#d4d4d4">wx.cloud.</span><span style="color:#dcdcaa">callFunction</span><span style="color:#f2cf1d">(</span><span style="color:#d670d6">{</span></span>
<span class="t ln" style="top:465.5px;color:#4b4b4b">22</span>
<span class="t cl" style="top:464.5px">      <span style="color:#9cdcfe">name</span><span style="color:#d4d4d4">: </span><span style="color:#e5675d">'xiaodian'</span><span style="color:#d4d4d4">,</span></span>
<span class="t ln" style="top:486.7px;color:#4b4b4b">23</span>
<span class="t cl" style="top:485.7px">      <span style="color:#9cdcfe">data</span><span style="color:#d4d4d4">: </span><span style="color:#3b9bf0">{</span> <span style="color:#9cdcfe">action</span><span style="color:#d4d4d4">: </span><span style="color:#e5675d">'initDb.run'</span> <span style="color:#3b9bf0">}</span><span style="color:#d4d4d4">,</span></span>
<!--/CODE-->
<div class="abs" style="left:64px;top:57px;width:1px;height:20px;background:#c9d4e6"></div>
<svg style="left:78.5px;top:62px" width="6" height="11" viewBox="0 0 6 11"><path d="M0.8 0.8H2.2Q3 0.8 3 1.6V9.4Q3 10.2 2.2 10.2H0.8M5.2 0.8H3.8Q3 0.8 3 1.6M3 9.4Q3 10.2 3.8 10.2H5.2" fill="none" stroke="#111" stroke-width="2.2"/><path d="M0.8 0.8H2.2Q3 0.8 3 1.6V9.4Q3 10.2 2.2 10.2H0.8M5.2 0.8H3.8Q3 0.8 3 1.6M3 9.4Q3 10.2 3.8 10.2H5.2" fill="none" stroke="#fff" stroke-width="0.9"/></svg>
<div class="abs" style="left:807px;top:14px;width:1px;height:494px;background:#3a3a3a"></div>
<div class="abs" style="left:807px;top:14px;width:10px;height:112px;background:#525252"></div>
<div class="abs" style="left:807px;top:56.5px;width:10px;height:21px;background:#5c5c5c"></div>
<div class="abs" style="left:807px;top:22.2px;width:10px;height:1.2px;background:#8a8a8a"></div>
</div>
<div id="panel" class="abs">
<span class="t ptab" style="left:14.0px;color:#9d9d9d">构建</span>
<span class="t ptab" style="left:44.0px;color:#f0f0f0">调试器</span>
<div class="abs" style="left:43.5px;top:19.7px;width:41.5px;height:1px;background:#d0d0d0"></div>
<div class="abs" style="left:73.5px;top:8px;width:11px;height:11px;border-radius:6px;background:#4b4b4b"></div>
<span class="t" style="left:73.5px;width:11px;text-align:center;top:9.8px;font-size:7.5px;color:#f0f0f0;font-weight:bold">4</span>
<span class="t ptab" style="left:99.5px;color:#9d9d9d">问题</span>
<span class="t ptab" style="left:129.5px;color:#9d9d9d">输出</span>
<span class="t ptab" style="left:160.5px;color:#9d9d9d">调试控制台</span>
<span class="t ptab" style="left:212.5px;color:#9d9d9d">终端</span>
<span class="t ptab" style="left:243.5px;color:#9d9d9d">代码质量</span>
<svg style="left:780.3px;top:10px" width="6.6" height="4.2" viewBox="0 0 8 5"><path d="M0.6 4.4 4 0.9 7.4 4.4" fill="none" stroke="#d8d8d8" stroke-width="1"/></svg>
<svg style="left:798.2px;top:9.7px" width="5.8" height="5.8" viewBox="0 0 7 7"><path d="M0.5 0.5 6.5 6.5M6.5 0.5 0.5 6.5" stroke="#d8d8d8" stroke-width="1.2"/></svg>

<div id="dtbar" class="abs" style="left:0;top:23px;width:817px;height:19px;background:#292a2b;border-top:1px solid #3a3a3a;border-bottom:1px solid #3a3a3a"></div>
<svg style="left:7px;top:28px" width="10" height="9" viewBox="0 0 10 9"><path d="M3.6 7.4H1.4Q0.6 7.4 0.6 6.6V1.4Q0.6 0.6 1.4 0.6H7Q7.8 0.6 7.8 1.4V3" fill="none" stroke="#8ab0d8" stroke-width="0.9" stroke-dasharray="1.4 0.6"/><path d="M4.6 3.8 9.4 5.6 7.4 6.4 9 8.2 8.2 8.8 6.6 7 5.6 8.6Z" fill="#b4c8e0"/></svg>
<div class="abs" style="left:23.5px;top:28px;width:1px;height:10px;background:#444"></div>
<span class="t dt" style="left:35.7px;color:#dcdcdc">Wxml</span>
<span class="t dt" style="left:71.4px;color:#dcdcdc">Console</span>
<span class="t dt" style="left:115.3px;color:#dcdcdc">Sources</span>
<span class="t dt" style="left:158.5px;color:#dcdcdc">Network</span>
<span class="t dt" style="left:204.4px;color:#dcdcdc">Performance</span>
<span class="t dt" style="left:264.0px;color:#dcdcdc">Memory</span>
<span class="t dt" style="left:309.3px;color:#dcdcdc">AppData</span>
<span class="t dt" style="left:355.7px;color:#dcdcdc">Storage</span>
<div class="abs" style="left:391px;top:24.5px;width:39px;height:17px;background:#000"></div>
<span class="t dt" style="left:398.0px;color:#fff">Sensor</span>
<span class="t dt" style="left:437.8px;color:#dcdcdc">Mock</span>
<span class="t dt" style="left:473.0px;color:#dcdcdc">Audits</span>
<span class="t dt" style="left:510.6px;color:#dcdcdc">Vulnerability</span>
<svg style="left:717.5px;top:29.5px" width="7" height="7" viewBox="0 0 7 7"><circle cx="3.5" cy="3.5" r="3.4" fill="#d9423e"/><path d="M2.2 2.2 4.8 4.8M4.8 2.2 2.2 4.8" stroke="#fff" stroke-width="0.9"/></svg>
<span class="t" style="left:727.5px;top:29px;font-size:8.5px;color:#e6e6e6">2</span>
<svg style="left:735.5px;top:29px" width="8" height="7" viewBox="0 0 8 7"><path d="M4 0.2 7.8 6.8H0.2Z" fill="#f0cd3a"/><path d="M4 2.4V4.6M4 5.3V6" stroke="#5a4a10" stroke-width="0.8"/></svg>
<span class="t" style="left:745px;top:29px;font-size:8.5px;color:#e6e6e6">6</span>
<div class="abs" style="left:755.5px;top:28px;width:1px;height:10px;background:#444"></div>
<svg style="left:763.5px;top:28px" width="10" height="10" viewBox="0 0 10 10"><circle cx="5" cy="5" r="2.6" fill="none" stroke="#b0b0b0" stroke-width="2"/><path d="M5 0.4V9.6M0.4 5H9.6M1.7 1.7 8.3 8.3M8.3 1.7 1.7 8.3" stroke="#b0b0b0" stroke-width="1.5"/><circle cx="5" cy="5" r="1.5" fill="#292a2b"/></svg>
<svg style="left:786px;top:28px" width="3" height="10" viewBox="0 0 3 10"><circle cx="1.5" cy="1.3" r="0.95" fill="#b4b4b4"/><circle cx="1.5" cy="5" r="0.95" fill="#b4b4b4"/><circle cx="1.5" cy="8.7" r="0.95" fill="#b4b4b4"/></svg>
<svg style="left:801px;top:28.5px" width="11" height="9" viewBox="0 0 11 9"><path d="M3 0.6H10.4V5.6H3Z" fill="none" stroke="#8e8e8e" stroke-width="1.5"/><path d="M3 3H0.6V8.4H8V5.6" fill="none" stroke="#8e8e8e" stroke-width="1.5"/></svg>

<div id="sensor" class="abs" style="left:0;top:42px;width:817px;height:84px;background:#232323"></div>
<span class="t" style="left:8.6px;top:54px;font-size:8.6px;color:#dedede;letter-spacing:-0.2px">Geolocation</span>
<div class="abs" style="left:64.5px;top:54px;width:8.5px;height:8.5px;border:1px solid #6a6a6a;border-radius:1.5px;background:#2a2a2a"></div>
<span class="t" style="left:76.5px;top:54px;font-size:8.6px;color:#dedede;letter-spacing:-0.2px">Enable</span>
<div class="abs inp" style="top:68.5px"></div><span class="t iv" style="top:73px">39.92</span><span class="t il" style="top:74px">Latitude</span>
<div class="abs inp" style="top:88px"></div><span class="t iv" style="top:92.5px">116.46</span><span class="t il" style="top:93px">Longitude</span>
<div class="abs inp" style="top:107.7px"></div><span class="t iv" style="top:112px">-1</span><span class="t il" style="top:112.5px">Speed</span>
<div class="abs" style="left:807px;top:42px;width:10px;height:84px;background:#2f2f2f"></div>
<div class="abs" style="left:807px;top:42px;width:10px;height:22px;background:#3f3f3f"></div>
</div>
<div id="status" class="abs">
<svg style="left:10px;top:5.5px" width="8" height="8" viewBox="0 0 8 8"><circle cx="4" cy="4" r="3.5" fill="none" stroke="#a4a4a4" stroke-width="0.8"/><path d="M2.6 2.6 5.4 5.4M5.4 2.6 2.6 5.4" stroke="#b4b4b4" stroke-width="0.8"/></svg>
<span class="t st" style="left:20.5px;font-size:8.4px;top:5.8px;color:#a8a8a8">0</span>
<svg style="left:27.5px;top:5.5px" width="9" height="8" viewBox="0 0 9 8"><path d="M4.5 0.7 8.4 7.4H0.6Z" fill="none" stroke="#b4b4b4" stroke-width="0.8"/><path d="M4.5 3V5.2M4.5 5.9V6.5" stroke="#b4b4b4" stroke-width="0.7"/></svg>
<span class="t st" style="left:38.5px;font-size:8.4px;top:5.8px;color:#a8a8a8">0</span>
<span class="t st" style="left:758.5px">行 3，列 6</span>
<span class="t st" style="left:806px">空格: 4</span>
<span class="t st" style="left:841px">UTF-8</span>
<span class="t st" style="left:872.5px">LF</span>
<span class="t st" style="left:890.5px;font-size:8px;letter-spacing:0.6px;top:5.6px">{}</span>
<span class="t st" style="left:902.5px">JavaScript</span>
</div>
<div class="abs" style="left:1181.7px;top:659.7px;width:33.8px;height:33.8px;border-radius:17px;background:linear-gradient(180deg,#3a8ae6 0%,#4c9cee 45%,#8ccbf5 100%);border:1.5px solid #eef6ff"></div>
<span class="t" style="left:1181.7px;width:33.8px;text-align:center;top:672.5px;font-size:8.8px;color:#c4e2fa;letter-spacing:-0.2px">00:23</span>
<span class="t" id="wm" style="left:1078.5px;top:685.5px;font-family:'Liberation Serif',serif;font-style:italic;font-weight:bold;font-size:16.5px;color:#f01414;transform-origin:0 0;transform:scaleX(1.395)">www.java1234.com</span>
<div id="green" class="abs"></div>
</body>
</html>
